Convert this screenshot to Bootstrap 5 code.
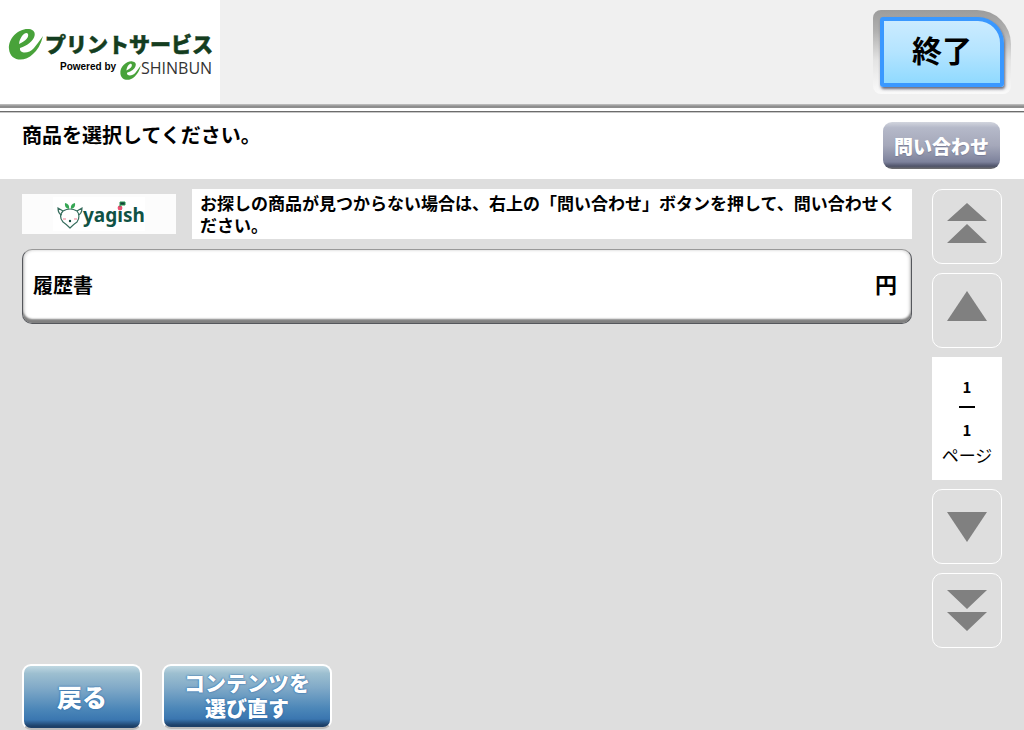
<!DOCTYPE html>
<html lang="ja">
<head>
<meta charset="utf-8">
<meta name="viewport" content="width=device-width, initial-scale=1">
<title>eプリントサービス</title>
<link rel="stylesheet" href="https://cdn.jsdelivr.net/npm/bootstrap@5.3.0/dist/css/bootstrap.min.css">
<style>
body{font-family:"Noto Sans CJK JP",sans-serif;background:#dedede;color:#000}
.topbar{background:#f0f0f0;height:104px}
.logo-box{width:220px;height:104px}
.logo-box svg,.shop-logo svg{display:block}
.rule{height:9px;background:linear-gradient(#b8b8b8 0 1px,#a0a0a0 1px 2px,#8e8e8e 2px 4px,#fff 4px 7px,#6c6c6c 7px 8px,#c8c8c8 8px 9px)}
.exit-frame{width:138px;height:84px;margin:10px 13px 0 0;padding:7px;border-radius:8px 34px 8px 8px;background:linear-gradient(#9c9c9c,#b0b0b0 25%,#e4e4e4 60%,#fafafa)}
.btn-exit{width:124px;height:70px;padding:0 0 6px;border:4px solid #3a98ff;border-radius:3px 26px 3px 3px;background:linear-gradient(#cbebff,#b4e4ff 50%,#90daff);box-shadow:1px 2px 3px #667;font-size:30px;line-height:40px;font-weight:700;color:#000}
.prompt{height:66px;padding:7px 24px 0 22px}
.prompt h1{font-size:20px;line-height:30px;font-weight:700}
.btn-ask{width:117px;height:47px;margin-top:2px;padding:0;border:0;border-radius:9px;background:linear-gradient(#d2d5de,#b5b9c9 12%,#a5a8ba 50%,#7d829c 85%,#50546a 94%,#707070);font-size:19px;line-height:28px;font-weight:900;color:#fff;text-shadow:0 1px 1px #777b95}
.content-area{padding:10px 22px 0}
.shop-row{margin-bottom:10px}
.shop-logo{width:154px;height:40px;margin-top:5px;background:#fcfcfc}
.notice{padding:3px 8px;font-size:17px;line-height:22px;font-weight:700}
.item-btn{height:75px;padding:0 14px 3px 10px;border:1px solid #55575c;border-top-color:#999;border-radius:10px;background:#fff;box-shadow:inset 0 -4px 2px #808080,inset -2px 0 3px #ddd,inset 2px 0 3px #ddd;font-size:20px;line-height:30px;font-weight:700;color:#000}
.yen{font-size:22px;line-height:30px;padding-bottom:4px}
.pager{width:70px;gap:9px}
.btn-page{height:75px;padding:0;border:1px solid #fff;border-radius:10px;background:none}
.btn-page svg{display:block;margin:auto;fill:#808080}
.page-count{height:123px;padding-top:18px;font-size:15px;line-height:24px;font-weight:700}
.page-bar{width:16px;height:2px;margin:7px auto 10px;background:#000}
.page-unit{font-size:17px;line-height:26px;font-weight:400}
.bottom-bar{padding:16px 22px 0;gap:20px}
.btn-blue{height:66px;padding:0;border:2px solid #fff;border-bottom-color:#bbb;border-radius:9px;background:linear-gradient(#c0d8e2,#9dbfd0 12%,#81aac8 35%,#4b86b8 70%,#3a76b0 87%,#1d4068 97%);color:#fff;font-weight:900;text-shadow:0 0 2px #2868a8,0 0 1px #2868a8}
.btn-back{width:120px;font-size:25px}
.btn-again{width:170px;height:65px;padding:0 18px 3px;font-size:21px;line-height:25px}
</style>
</head>
<body>
<div class="min-vh-100 d-flex flex-column">
<header>
  <div class="topbar d-flex justify-content-between align-items-start">
    <div class="logo-box bg-white">
      <svg width="220" height="104" role="img" aria-label="eプリントサービス Powered by eSHINBUN">
        <defs><path id="leaf" fill-rule="evenodd" d="M9 49C8 38 19 28 29 29C39 30 36 43 20 48C19 54 29 54 34 48Q38 43 43 36Q40 48 33 54C24 63 10 61 9 49ZM19 44C26 41 29 37 28 34C26 31 20 36 19 44Z"/></defs>
        <use href="#leaf" fill="#48a23a"/>
        <text x="45" y="52" font-size="21" font-weight="900" fill="#143d20" stroke="#143d20" stroke-width=".5">プリントサービス</text>
        <text x="60" y="70" font-family="Liberation Sans,sans-serif" font-size="10" font-weight="700">Powered by</text>
        <use href="#leaf" fill="#48a23a" transform="translate(115 44) scale(.6)"/>
        <text x="141" y="74" font-family="Open Sans,sans-serif" font-size="16" fill="#333">SHINBUN</text>
      </svg>
    </div>
    <div class="exit-frame"><button type="button" class="btn btn-exit">終了</button></div>
  </div>
  <div class="rule"></div>
  <div class="prompt bg-white d-flex justify-content-between align-items-start">
    <h1 class="m-0">商品を選択してください。</h1>
    <button type="button" class="btn btn-ask">問い合わせ</button>
  </div>
</header>
<main class="content-area flex-grow-1 d-flex align-items-start">
  <div class="flex-grow-1 me-3 pe-1">
    <div class="shop-row d-flex align-items-start gap-3">
      <div class="shop-logo flex-shrink-0">
        <svg width="154" height="40" role="img" aria-label="yagish">
          <rect x="31" y="3" width="92" height="34" fill="#fff"/>
          <g fill="none" stroke="#356c5c" stroke-width="1.2"><path d="M41 17Q48 13 55 17Q59 22 55 28Q52 30 48 34Q44 30 41 28Q36 22 41 17Z"/><path d="M41 17L36 14Q36 20 40 21M55 17L60 14Q60 20 56 21"/></g>
          <path d="M47 15Q42 14 43 9Q48 10 47 15ZM49 15Q48 10 53 9Q54 14 49 15Z" fill="#35a653"/>
          <circle cx="48" cy="27" r="1.2" fill="#164f42"/><path d="M41 25h3M52 25h3" stroke="#f5a6b5" stroke-width="1.5"/>
          <text x="61" y="28" font-family="Noto Sans,sans-serif" font-size="19" font-weight="700" fill="#105244">yagish</text>
          <circle cx="98" cy="14" r="2.4" fill="#ee4f72"/><path d="M98 13V8h5v3h-5" stroke="#269550" fill="#173f38"/>
        </svg>
      </div>
      <p class="notice bg-white flex-grow-1 mb-0">お探しの商品が見つからない場合は、右上の「問い合わせ」ボタンを押して、問い合わせください。</p>
    </div>
    <button type="button" class="btn item-btn w-100 d-flex justify-content-between align-items-center"><span>履歴書</span><span class="yen">円</span></button>
  </div>
  <nav class="pager d-flex flex-column flex-shrink-0" aria-label="ページ送り">
    <button type="button" class="btn btn-page" aria-label="最初のページ"><svg width="40" height="48"><path d="M20 0L40 18H0ZM20 21L40 40H0Z"/></svg></button>
    <button type="button" class="btn btn-page" aria-label="前のページ"><svg width="40" height="48"><path d="M20 4L40 34H0Z"/></svg></button>
    <div class="page-count bg-white text-center"><div>1</div><div class="page-bar"></div><div>1</div><div class="page-unit">ページ</div></div>
    <button type="button" class="btn btn-page" aria-label="次のページ"><svg width="40" height="48"><path d="M0 9H40L20 39Z"/></svg></button>
    <button type="button" class="btn btn-page" aria-label="最後のページ"><svg width="40" height="48"><path d="M0 3H40L20 22ZM0 25H40L20 44Z"/></svg></button>
  </nav>
</main>
<footer class="bottom-bar d-flex align-items-start">
  <button type="button" class="btn btn-blue btn-back">戻る</button>
  <button type="button" class="btn btn-blue btn-again">コンテンツを選び直す</button>
</footer>
</div>
<script src="https://cdn.jsdelivr.net/npm/bootstrap@5.3.0/dist/js/bootstrap.bundle.min.js"></script>
</body>
</html>
